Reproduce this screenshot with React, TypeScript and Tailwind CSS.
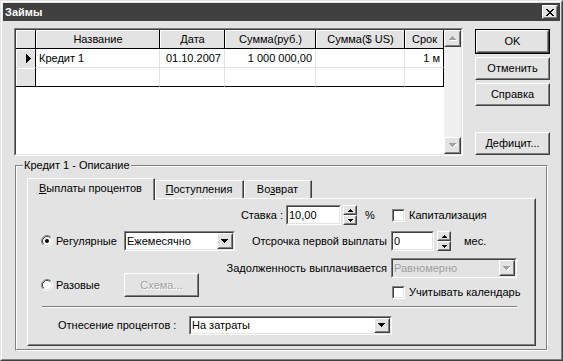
import React from "react";

type BoxProps = { className?: string; inner?: string; children?: React.ReactNode };

function Raised({ className = "", inner = "", children }: BoxProps) {
  return (
    <div className={`border border-t-white border-l-white border-r-[#404040] border-b-[#404040] bg-[#e3e3e3] ${className}`}>
      <div className={`w-full h-full border border-t-[#e3e3e3] border-l-[#e3e3e3] border-r-[#808080] border-b-[#808080] flex items-center justify-center ${inner}`}>
        {children}
      </div>
    </div>
  );
}

function Sunken({ className = "", inner = "", children }: BoxProps) {
  return (
    <div className={`border border-t-[#808080] border-l-[#808080] border-r-white border-b-white ${className}`}>
      <div className={`w-full h-full border border-t-[#404040] border-l-[#404040] border-r-[#e3e3e3] border-b-[#e3e3e3] ${inner}`}>
        {children}
      </div>
    </div>
  );
}

function TriDown({ color = "#000", shadow = false }: { color?: string; shadow?: boolean }) {
  const rows = [
    [0, 0, 7],
    [1, 1, 5],
    [2, 2, 3],
    [3, 3, 1],
  ];
  return (
    <svg width="8" height="5" shapeRendering="crispEdges">
      {shadow && rows.map(([x, y, w], i) => <rect key={"s" + i} x={x + 1} y={y + 1} width={w} height="1" fill="#fff" />)}
      {rows.map(([x, y, w], i) => <rect key={i} x={x} y={y} width={w} height="1" fill={color} />)}
    </svg>
  );
}

function TriUp({ color = "#000", shadow = false }: { color?: string; shadow?: boolean }) {
  const rows = [
    [3, 0, 1],
    [2, 1, 3],
    [1, 2, 5],
    [0, 3, 7],
  ];
  return (
    <svg width="8" height="5" shapeRendering="crispEdges">
      {shadow && rows.map(([x, y, w], i) => <rect key={"s" + i} x={x + 1} y={y + 1} width={w} height="1" fill="#fff" />)}
      {rows.map(([x, y, w], i) => <rect key={i} x={x} y={y} width={w} height="1" fill={color} />)}
    </svg>
  );
}

function SmallTri({ up }: { up: boolean }) {
  return (
    <svg width="5" height="3" shapeRendering="crispEdges">
      {up ? (
        <>
          <rect x="2" y="0" width="1" height="1" fill="#000" />
          <rect x="1" y="1" width="3" height="1" fill="#000" />
          <rect x="0" y="2" width="5" height="1" fill="#000" />
        </>
      ) : (
        <>
          <rect x="0" y="0" width="5" height="1" fill="#000" />
          <rect x="1" y="1" width="3" height="1" fill="#000" />
          <rect x="2" y="2" width="1" height="1" fill="#000" />
        </>
      )}
    </svg>
  );
}

function RowPointer() {
  return (
    <svg width="5" height="9" shapeRendering="crispEdges">
      <rect x="0" y="0" width="1" height="9" fill="#000" />
      <rect x="1" y="1" width="1" height="7" fill="#000" />
      <rect x="2" y="2" width="1" height="5" fill="#000" />
      <rect x="3" y="3" width="1" height="3" fill="#000" />
      <rect x="4" y="4" width="1" height="1" fill="#000" />
    </svg>
  );
}

function CloseX() {
  const px = [
    "xx....xx",
    ".xx..xx.",
    "..xxxx..",
    "...xx...",
    "..xxxx..",
    ".xx..xx.",
    "xx....xx",
  ];
  return (
    <svg width="8" height="7" shapeRendering="crispEdges">
      {px.flatMap((r, y) =>
        r.split("").map((c, x) => (c === "x" ? <rect key={`${x}-${y}`} x={x} y={y} width="1" height="1" fill="#000" /> : null))
      )}
    </svg>
  );
}

function Radio({ checked = false }: { checked?: boolean }) {
  return (
    <svg width="12" height="12" viewBox="0 0 12 12" className="shrink-0">
      <circle cx="6" cy="6" r="4.5" fill="#fff" />
      <path d="M2.11 9.89 A5.5 5.5 0 0 1 9.89 2.11" stroke="#808080" strokeWidth="1" fill="none" />
      <path d="M9.89 2.11 A5.5 5.5 0 0 1 2.11 9.89" stroke="#fff" strokeWidth="1" fill="none" />
      <path d="M2.82 9.18 A4.5 4.5 0 0 1 9.18 2.82" stroke="#404040" strokeWidth="1" fill="none" />
      <path d="M9.18 2.82 A4.5 4.5 0 0 1 2.82 9.18" stroke="#e3e3e3" strokeWidth="1" fill="none" />
      {checked && <circle cx="6" cy="6" r="2" fill="#000" />}
    </svg>
  );
}

function Check() {
  return <Sunken className="w-[13px] h-[13px] shrink-0" inner="bg-white" />;
}

function Combo({ className, text, disabled = false }: { className: string; text: string; disabled?: boolean }) {
  return (
    <Sunken className={`shrink-0 ${className}`} inner={`flex items-center ${disabled ? "bg-[#e3e3e3]" : "bg-white"}`}>
      <span className={`flex-1 pl-[1px] whitespace-nowrap ${disabled ? "text-[#a0a0a0]" : ""}`}>{text}</span>
      <Raised className="w-[16px] h-full">
        <TriDown color={disabled ? "#a0a0a0" : "#000"} shadow={disabled} />
      </Raised>
    </Sunken>
  );
}

function Edit({ className, text }: { className: string; text: string }) {
  return (
    <Sunken className={`shrink-0 ${className}`} inner="bg-white flex items-center">
      <span className="pl-[1px]">{text}</span>
    </Sunken>
  );
}

function Spin({ className = "" }: { className?: string }) {
  return (
    <div className={`w-[14px] h-[20px] flex flex-col shrink-0 ${className}`}>
      <Raised className="w-full h-[10px]">
        <SmallTri up />
      </Raised>
      <Raised className="w-full h-[10px]">
        <SmallTri up={false} />
      </Raised>
    </div>
  );
}

const cols = [
  { w: "w-[20px]", h: "" },
  { w: "w-[124px]", h: "Название" },
  { w: "w-[65px]", h: "Дата" },
  { w: "w-[91px]", h: "Сумма(руб.)" },
  { w: "w-[89px]", h: "Сумма($ US)" },
  { w: "w-[39px]", h: "Срок" },
];

function Grid() {
  return (
    <Sunken className="w-[449px] h-[128px] shrink-0" inner="bg-white flex">
      <div className="w-[428px] h-full flex flex-col">
        <div className="flex h-[19px]">
          {cols.map((c, i) => (
            <div key={i} className={`${c.w} h-full border-r border-b border-black bg-[#e3e3e3]`}>
              <div className="h-full border-t border-l border-white flex items-center justify-center whitespace-nowrap">{c.h}</div>
            </div>
          ))}
        </div>
        <div className="flex h-[19px]">
          <div className="w-[20px] h-full border-r border-r-black border-b border-b-[#e3e3e3] bg-[#e3e3e3]">
            <div className="h-full border-t border-l border-white flex items-center pl-[9px]">
              <RowPointer />
            </div>
          </div>
          <div className="w-[124px] h-full border-r border-b border-[#e3e3e3] flex items-center pl-[3px]">Кредит 1</div>
          <div className="w-[65px] h-full border-r border-b border-[#e3e3e3] flex items-center justify-end pr-[3px]">01.10.2007</div>
          <div className="w-[91px] h-full border-r border-b border-[#e3e3e3] flex items-center justify-end pr-[3px]">1 000 000,00</div>
          <div className="w-[89px] h-full border-r border-b border-[#e3e3e3]"></div>
          <div className="w-[39px] h-full border-r border-r-black border-b border-b-[#e3e3e3] flex items-center justify-end pr-[3px]">1 м</div>
        </div>
        <div className="flex h-[19px]">
          <div className="w-[20px] h-full border-r border-b border-black bg-[#e3e3e3]">
            <div className="h-full border-t border-l border-white"></div>
          </div>
          <div className="w-[124px] h-full border-r border-r-[#e3e3e3] border-b border-b-black"></div>
          <div className="w-[65px] h-full border-r border-r-[#e3e3e3] border-b border-b-black"></div>
          <div className="w-[91px] h-full border-r border-r-[#e3e3e3] border-b border-b-black"></div>
          <div className="w-[89px] h-full border-r border-r-[#e3e3e3] border-b border-b-black"></div>
          <div className="w-[39px] h-full border-r border-b border-black"></div>
        </div>
      </div>
      <div className="w-[17px] h-full flex flex-col bg-[#f0f0f0]">
        <Raised className="w-[17px] h-[17px]">
          <TriUp color="#a0a0a0" shadow />
        </Raised>
        <div className="flex-1"></div>
        <Raised className="w-[17px] h-[17px]">
          <TriDown color="#a0a0a0" shadow />
        </Raised>
      </div>
    </Sunken>
  );
}

function Btn({ children, className = "" }: { children: React.ReactNode; className?: string }) {
  return <Raised className={`w-[75px] h-[23px] ${className}`}>{children}</Raised>;
}

export default function App() {
  return (
    <div className="w-[563px] h-[361px] font-['Liberation_Sans',Arial,sans-serif] text-[11px] leading-[13px] text-black bg-[#e3e3e3] border border-t-[#e3e3e3] border-l-[#e3e3e3] border-r-[#404040] border-b-[#404040]">
      <div className="w-full h-full border border-t-white border-l-white border-r-[#808080] border-b-[#808080] p-[1px] flex flex-col">
        {/* Title bar */}
        <div className="h-[18px] bg-[#404040] flex items-center justify-between pl-[2px] pr-[2px] shrink-0">
          <span className="text-white font-bold text-[11px]">Займы</span>
          <Raised className="w-[16px] h-[14px]">
            <CloseX />
          </Raised>
        </div>

        {/* Body */}
        <div className="flex-1 pt-[7px] pl-[11px] flex flex-col">
          <div className="flex">
            <Grid />
            <div className="ml-[12px] w-[75px] h-[128px] flex flex-col pt-[1px]">
              <div className="w-[75px] h-[25px] border border-black">
                <Raised className="w-full h-full">OK</Raised>
              </div>
              <Btn className="mt-[3px]">Отменить</Btn>
              <Btn className="mt-[3px]">Справка</Btn>
              <Btn className="mt-auto mb-[1px]">Дефицит...</Btn>
            </div>
          </div>

          {/* Group box */}
          <div className="relative ml-[1px] mt-[9px] w-[533px] h-[186px] border border-t-[#808080] border-l-[#808080] border-r-white border-b-white">
            <span className="absolute left-[7px] -top-[7px] px-[1px] bg-[#e3e3e3] whitespace-nowrap">Кредит 1 - Описание</span>
            <div className="w-full h-full border border-t-white border-l-white border-r-[#808080] border-b-[#808080] pt-[11px] pl-[10px]">
              {/* Tabs */}
              <div className="flex items-end h-[20px]">
                <div className="relative z-10 w-[128px] h-[22px] -mb-[2px] bg-[#e3e3e3] border-t border-l border-white border-r border-r-[#404040]">
                  <div className="h-full border-r border-r-[#808080] flex items-start justify-center pt-[3px]">
                    <span>
                      <span className="underline">В</span>ыплаты процентов
                    </span>
                  </div>
                </div>
                <div className="w-[89px] h-[18px] border-t border-l border-white border-r border-r-[#404040]">
                  <div className="h-full border-r border-r-[#808080] flex items-center justify-center">
                    <span>
                      <span className="underline">П</span>оступления
                    </span>
                  </div>
                </div>
                <div className="w-[68px] h-[18px] border-t border-l border-white border-r border-r-[#404040]">
                  <div className="h-full border-r border-r-[#808080] flex items-center justify-center">
                    <span>
                      Во<span className="underline">з</span>врат
                    </span>
                  </div>
                </div>
              </div>

              {/* Tab sheet */}
              <div className="w-[509px] h-[148px] border border-t-white border-l-white border-r-[#404040] border-b-[#404040]">
                <div className="w-full h-full border border-t-[#e3e3e3] border-l-[#e3e3e3] border-r-[#808080] border-b-[#808080] flex flex-col">
                  <div className="flex h-[99px]">
                    {/* Left column */}
                    <div className="w-[211px] pt-[31px] flex flex-col shrink-0">
                      <div className="flex items-center h-[20px]">
                        <div className="w-[95px] pl-[12px] flex items-center shrink-0">
                          <Radio checked />
                          <span className="ml-[3px]">Регулярные</span>
                        </div>
                        <Combo className="w-[111px] h-[20px]" text="Ежемесячно" />
                      </div>
                      <div className="flex items-center h-[24px] mt-[22px]">
                        <div className="w-[95px] pl-[12px] flex items-center shrink-0">
                          <Radio />
                          <span className="ml-[3px]">Разовые</span>
                        </div>
                        <Raised className="w-[75px] h-[24px]">
                          <span className="text-[#a0a0a0] [text-shadow:1px_1px_0_#ffffff]">Схема...</span>
                        </Raised>
                      </div>
                    </div>

                    {/* Right column */}
                    <div className="w-[294px] pt-[5px] flex flex-col">
                      <div className="flex items-center h-[20px]">
                        <div className="w-[152px] flex items-center shrink-0">
                          <div className="w-[43px] flex justify-end shrink-0">
                            <span className="whitespace-nowrap">Ставка :</span>
                          </div>
                          <Edit className="ml-[3px] w-[55px] h-[20px]" text="10,00" />
                          <Spin className="ml-[2px]" />
                          <span className="ml-[8px]">%</span>
                        </div>
                        <Check />
                        <span className="ml-[4px]">Капитализация</span>
                      </div>
                      <div className="flex items-center h-[20px] mt-[6px]">
                        <div className="w-[147px] flex justify-end shrink-0">
                          <span className="whitespace-nowrap">Отсрочка первой выплаты</span>
                        </div>
                        <Edit className="ml-[4px] w-[43px] h-[20px]" text="0" />
                        <Spin className="ml-[3px]" />
                        <span className="ml-[13px]">мес.</span>
                      </div>
                      <div className="flex items-center h-[20px] mt-[7px]">
                        <div className="w-[147px] flex justify-end shrink-0">
                          <span className="whitespace-nowrap">Задолженность выплачивается</span>
                        </div>
                        <Combo className="ml-[4px] w-[126px] h-[20px]" text="Равномерно" disabled />
                      </div>
                      <div className="flex items-center h-[13px] mt-[8px] pl-[152px]">
                        <Check />
                        <span className="ml-[4px] whitespace-nowrap">Учитывать календарь</span>
                      </div>
                    </div>
                  </div>

                  {/* Separator */}
                  <div className="ml-[13px] mt-[7px] w-[475px] h-[2px] border-t border-t-[#808080] border-b border-b-white"></div>

                  {/* Bottom row */}
                  <div className="flex items-center h-[19px] mt-[8px]">
                    <div className="w-[160px] pl-[29px] shrink-0 whitespace-nowrap">Отнесение процентов :</div>
                    <Combo className="w-[203px] h-[19px]" text="На затраты" />
                  </div>
                </div>
              </div>
            </div>
          </div>
        </div>
      </div>
    </div>
  );
}
